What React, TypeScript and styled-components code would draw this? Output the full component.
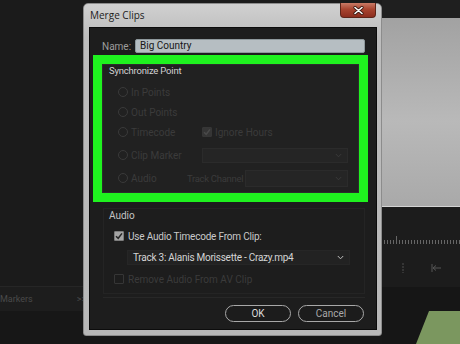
import styled, { createGlobalStyle } from "styled-components";

const GlobalStyle = createGlobalStyle`
  html, body {
    margin: 0;
    padding: 0;
    background: #1b1b1b;
  }
  body {
    font-family: Roboto, "Open Sans", sans-serif;
  }
`

const Page = styled.div`
  position: relative;
  width: 460px;
  height: 344px;
  overflow: hidden;
  display: flex;
  background: #1b1b1b;
`

const LeftPane = styled.div`
  width: 383px;
  display: flex;
  flex-direction: column;
`

const PaneFill = styled.div`
  flex: 1;
  background: #1b1b1b;
`

const MarkerBar = styled.div`
  height: 24px;
  border-top: 1px solid #262626;
  background: #1d1d1d;
  display: flex;
  align-items: center;
  gap: 44px;
  font-size: 9px;
  color: #4a4a4a;
`

const PaneBottom = styled.div`
  height: 33px;
  background: #171717;
`

const RightPane = styled.div`
  flex: 1;
  display: flex;
  flex-direction: column;
`

const TopStrip = styled.div`
  height: 18px;
  background: #1f1f1f;
`

const Monitor = styled.div`
  height: 188px;
  background: linear-gradient(#a2a2a2, #b9b9b9 55%, #a9a9a9);
  border-bottom: 1px solid #d4d4d4;
`

const Ruler = styled.div`
  height: 80px;
  background: #1c1c1c;
  display: flex;
  flex-direction: column;
`

const Ticks = styled.div`
  margin-top: 29px;
  height: 8px;
  display: flex;
  align-items: flex-end;
  gap: 2px;
  padding-left: 2px;
`

const Tick = styled.div<{ $tall?: boolean }>`
  width: 1px;
  height: ${p => (p.$tall ? 8 : 4)}px;
  background: #666666;
`

const TransportRow = styled.div`
  margin-top: 19px;
  display: flex;
  align-items: center;
  gap: 26px;
  padding-left: 19px;
`

const TrackArea = styled.div`
  flex: 1;
  background: #161616;
  display: flex;
  flex-direction: column;
  justify-content: flex-end;
`

const ClipShape = styled.div`
  margin-left: 34px;
  height: 33px;
  background: #7b975f;
  clip-path: polygon(13px 0, 100% 0, 100% 100%, 0 100%);
`

const Dialog = styled.div`
  position: absolute;
  left: 83px;
  top: 3px;
  width: 299px;
  height: 333px;
  box-sizing: border-box;
  border: 1px solid #8c8c8c;
  border-radius: 5px 5px 3px 3px;
  background: linear-gradient(#d0d0d0, #bdbdbd 10%, #b8b8b8);
  display: flex;
  flex-direction: column;
  padding: 0 4px 5px 5px;
`

const TitleBar = styled.div`
  height: 23px;
  display: flex;
  align-items: center;
  justify-content: space-between;
  padding-left: 1px;
`

const Title = styled.span`
  font-family: "Open Sans", sans-serif;
  font-size: 10px;
  color: #1c1c1c;
  margin-top: -1px;
`

const CloseButton = styled.div`
  align-self: flex-start;
  width: 36px;
  height: 15px;
  margin-top: -1px;
  margin-right: 1px;
  box-sizing: border-box;
  border: 1px solid #5e2418;
  border-top: none;
  border-radius: 0 0 4px 4px;
  background: linear-gradient(#c97a66, #a8442f 45%, #8c2d1e);
  display: flex;
  align-items: center;
  justify-content: center;
`

const Body = styled.div`
  flex: 1;
  background: #1d1d1d;
  border: 1px solid #0c0c0c;
  display: flex;
  flex-direction: column;
`

const NameRow = styled.div`
  display: flex;
  align-items: center;
  gap: 4px;
  margin-top: 11px;
  padding-left: 12px;
`

const NameLabel = styled.span`
  font-size: 10px;
  color: #9c9c9c;
`

const NameInput = styled.div`
  width: 230px;
  height: 14px;
  box-sizing: border-box;
  background: #b6bec2;
  border: 1px solid #8e989c;
  border-radius: 2px;
  font-size: 10px;
  line-height: 12px;
  padding-left: 4px;
  color: #161616;
`

const Highlight = styled.div`
  margin: 2px 0 0 3px;
  width: 275px;
  height: 147px;
  box-sizing: border-box;
  border: 9px solid #1ff21f;
`

const SyncGroup = styled.div`
  height: 100%;
  box-sizing: border-box;
  background: #212121;
  border: 1px solid #2c2c2c;
  display: flex;
  flex-direction: column;
`

const GroupTitle = styled.div<{ $h: number }>`
  height: ${p => p.$h}px;
  padding-left: 6px;
  font-size: 9.5px;
  letter-spacing: -0.2px;
  line-height: 12px;
  color: #d2d2d2;
`

const Row = styled.div<{ $h: number }>`
  height: ${p => p.$h}px;
  display: flex;
  align-items: center;
  padding-left: 15px;
`

const RadioCell = styled.div<{ $w: number }>`
  width: ${p => p.$w}px;
  display: flex;
  align-items: center;
  gap: 3px;
`

const Radio = styled.span`
  width: 10px;
  height: 10px;
  box-sizing: border-box;
  border-radius: 50%;
  border: 1.5px solid #3a3a3a;
`

const DimText = styled.span`
  font-size: 10px;
  color: #3b3b3b;
  white-space: nowrap;
`

const TrackLabel = styled(DimText)`
  width: 58px;
  font-size: 9.5px;
  letter-spacing: -0.3px;
`

const CheckCell = styled.div`
  display: flex;
  align-items: center;
  gap: 3px;
`

const Box = styled.span<{ $on?: boolean; $dim?: boolean }>`
  width: 10px;
  height: 10px;
  box-sizing: border-box;
  border-radius: 1px;
  border: 1px solid ${p => (p.$dim ? "#363636" : "#7c7c7c")};
  background: ${p => (p.$on ? (p.$dim ? "#353535" : "#a4a4a4") : "transparent")};
  display: flex;
  align-items: center;
  justify-content: center;
`

const Select = styled.div<{ $w: number; $h: number; $dim?: boolean }>`
  width: ${p => p.$w}px;
  height: ${p => p.$h}px;
  box-sizing: border-box;
  background: ${p => (p.$dim ? "#252525" : "#222222")};
  border: 1px solid ${p => (p.$dim ? "#2b2b2b" : "#262626")};
  display: flex;
  align-items: center;
  justify-content: space-between;
  padding: 0 5px;
  font-size: 10px;
  letter-spacing: -0.25px;
  color: #d4d4d4;
`

const AudioGroup = styled.div`
  margin: 6px 11px 0 13px;
  height: 84px;
  border: 1px solid #242424;
  display: flex;
  flex-direction: column;
`

const AudioTitle = styled.div`
  padding-left: 5px;
  margin-top: 1px;
  height: 16px;
  font-size: 10px;
  color: #c4c4c4;
`

const CheckRow = styled.div<{ $h: number }>`
  height: ${p => p.$h}px;
  display: flex;
  align-items: center;
  gap: 4px;
  padding-left: 10px;
`

const LightText = styled.span`
  font-size: 10px;
  letter-spacing: -0.2px;
  color: #c9c9c9;
`

const SelectRow = styled.div`
  height: 22px;
  display: flex;
  align-items: center;
  padding-left: 23px;
`

const Divider = styled.div`
  margin: 3px 11px 0 13px;
  height: 1px;
  background: #272727;
`

const Buttons = styled.div`
  margin-top: 7px;
  display: flex;
  justify-content: flex-end;
  gap: 7px;
  padding-right: 12px;
`

const PillButton = styled.div<{ $muted?: boolean }>`
  width: 66px;
  height: 17px;
  box-sizing: border-box;
  border: 1.5px solid #a8a8a8;
  border-radius: 9px;
  background: #1c1c1c;
  display: flex;
  align-items: center;
  justify-content: center;
  font-size: 10px;
  color: ${p => (p.$muted ? "#a9a9a9" : "#dcdcdc")};
`

const Chevron = ({ color }: { color: string }) => (
  <svg width="7" height="5" viewBox="0 0 7 5">
    <path d="M0.8 1 L3.5 3.8 L6.2 1" fill="none" stroke={color} strokeWidth="1" />
  </svg>
)

const Check = ({ color }: { color: string }) => (
  <svg width="8" height="8" viewBox="0 0 8 8">
    <path d="M1 4.2 L3.2 6.3 L7 1.4" fill="none" stroke={color} strokeWidth="1.5" />
  </svg>
)

const ticks = Array.from({ length: 26 }, (_, i) => i)

export default function App() {
  return (
    <>
      <GlobalStyle />
      <Page>
        <LeftPane>
          <PaneFill />
          <MarkerBar>
            <span>Markers</span>
            <span>&gt;&gt;</span>
          </MarkerBar>
          <PaneBottom />
        </LeftPane>
        <RightPane>
          <TopStrip />
          <Monitor />
          <Ruler>
            <Ticks>
              {ticks.map(i => (
                <Tick key={i} $tall={i === 4} />
              ))}
            </Ticks>
            <TransportRow>
              <svg width="4" height="10" viewBox="0 0 4 10">
                <path d="M2 0 V10" stroke="#4e4e4e" strokeWidth="1" strokeDasharray="2 1" />
              </svg>
              <svg width="10" height="8" viewBox="0 0 10 8">
                <path d="M1 0 V8 M2 4 H10 M2 4 L5 1.5 M2 4 L5 6.5" stroke="#555" strokeWidth="1" fill="none" />
              </svg>
            </TransportRow>
          </Ruler>
          <TrackArea>
            <ClipShape />
          </TrackArea>
        </RightPane>

        <Dialog>
          <TitleBar>
            <Title>Merge Clips</Title>
            <CloseButton>
              <svg width="11" height="9" viewBox="0 0 11 9">
                <path d="M2 1.5 L9 7.5 M9 1.5 L2 7.5" stroke="#3a1810" strokeWidth="3.2" strokeLinecap="round" />
                <path d="M2 1.5 L9 7.5 M9 1.5 L2 7.5" stroke="#ffffff" strokeWidth="1.6" strokeLinecap="round" />
              </svg>
            </CloseButton>
          </TitleBar>
          <Body>
            <NameRow>
              <NameLabel>Name:</NameLabel>
              <NameInput>Big Country</NameInput>
            </NameRow>

            <Highlight>
              <SyncGroup>
                <GroupTitle $h={17}>Synchronize Point</GroupTitle>
                <Row $h={20}>
                  <RadioCell $w={84}>
                    <Radio />
                    <DimText>In Points</DimText>
                  </RadioCell>
                </Row>
                <Row $h={20}>
                  <RadioCell $w={84}>
                    <Radio />
                    <DimText>Out Points</DimText>
                  </RadioCell>
                </Row>
                <Row $h={20}>
                  <RadioCell $w={84}>
                    <Radio />
                    <DimText>Timecode</DimText>
                  </RadioCell>
                  <CheckCell>
                    <Box $on $dim>
                      <Check color="#4a4a4a" />
                    </Box>
                    <DimText>Ignore Hours</DimText>
                  </CheckCell>
                </Row>
                <Row $h={26}>
                  <RadioCell $w={84}>
                    <Radio />
                    <DimText>Clip Marker</DimText>
                  </RadioCell>
                  <Select $w={146} $h={15} $dim>
                    <span />
                    <Chevron color="#3a3a3a" />
                  </Select>
                </Row>
                <Row $h={20}>
                  <RadioCell $w={69}>
                    <Radio />
                    <DimText>Audio</DimText>
                  </RadioCell>
                  <TrackLabel>Track Channel</TrackLabel>
                  <Select $w={103} $h={17} $dim>
                    <span />
                    <Chevron color="#3a3a3a" />
                  </Select>
                </Row>
              </SyncGroup>
            </Highlight>

            <AudioGroup>
              <AudioTitle>Audio</AudioTitle>
              <CheckRow $h={20}>
                <Box $on>
                  <Check color="#262626" />
                </Box>
                <LightText>Use Audio Timecode From Clip:</LightText>
              </CheckRow>
              <SelectRow>
                <Select $w={223} $h={15}>
                  <span>Track 3: Alanis Morissette - Crazy.mp4</span>
                  <Chevron color="#bcbcbc" />
                </Select>
              </SelectRow>
              <CheckRow $h={22}>
                <Box $dim />
                <DimText>Remove Audio From AV Clip</DimText>
              </CheckRow>
            </AudioGroup>

            <Divider />

            <Buttons>
              <PillButton>OK</PillButton>
              <PillButton $muted>Cancel</PillButton>
            </Buttons>
          </Body>
        </Dialog>
      </Page>
    </>
  )
}
